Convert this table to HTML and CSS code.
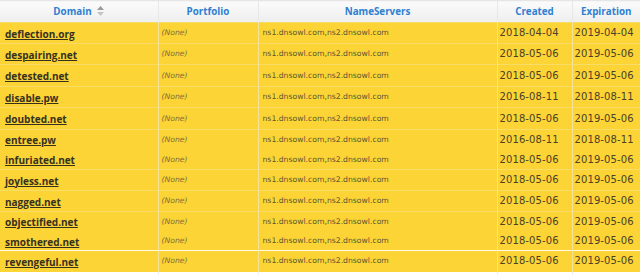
FILE: index.html
```html
<!DOCTYPE html>
<html lang="en">
<head>
<meta charset="UTF-8" />
<meta name="viewport" content="width=device-width, initial-scale=1" />
<title>Domains</title>
<link rel="stylesheet" href="styles.css">
</head>
<body>
  <table class="domains">
    <colgroup>
      <col class="c-domain" />
      <col class="c-portfolio" />
      <col class="c-ns" />
      <col class="c-created" />
      <col class="c-exp" />
    </colgroup>
    <thead>
      <tr>
        <th>Domain <span class="sort"><svg width="7" height="10" viewBox="0 0 7 10"><path d="M3.5 0L7 4H0z" fill="#9a9a9a"/><path d="M0 6h7L3.5 10z" fill="#c4c4c4"/></svg></span></th>
        <th>Portfolio</th>
        <th>NameServers</th>
        <th>Created</th>
        <th>Expiration</th>
      </tr>
    </thead>
    <tbody>
      <tr class="h21"><td class="name"><a href="#">deflection.org</a></td><td class="pf">(None)</td><td class="ns">ns1.dnsowl.com,ns2.dnsowl.com</td><td class="date">2018-04-04</td><td class="date">2019-04-04</td></tr>
      <tr class="h21"><td class="name"><a href="#">despairing.net</a></td><td class="pf">(None)</td><td class="ns">ns1.dnsowl.com,ns2.dnsowl.com</td><td class="date">2018-05-06</td><td class="date">2019-05-06</td></tr>
      <tr class="h22"><td class="name"><a href="#">detested.net</a></td><td class="pf">(None)</td><td class="ns">ns1.dnsowl.com,ns2.dnsowl.com</td><td class="date">2018-05-06</td><td class="date">2019-05-06</td></tr>
      <tr class="h21"><td class="name"><a href="#">disable.pw</a></td><td class="pf">(None)</td><td class="ns">ns1.dnsowl.com,ns2.dnsowl.com</td><td class="date">2016-08-11</td><td class="date">2018-08-11</td></tr>
      <tr class="h22"><td class="name"><a href="#">doubted.net</a></td><td class="pf">(None)</td><td class="ns">ns1.dnsowl.com,ns2.dnsowl.com</td><td class="date">2018-05-06</td><td class="date">2019-05-06</td></tr>
      <tr class="h20"><td class="name"><a href="#">entree.pw</a></td><td class="pf">(None)</td><td class="ns">ns1.dnsowl.com,ns2.dnsowl.com</td><td class="date">2016-08-11</td><td class="date">2018-08-11</td></tr>
      <tr class="h20 joined"><td class="name"><a href="#">infuriated.net</a></td><td class="pf">(None)</td><td class="ns">ns1.dnsowl.com,ns2.dnsowl.com</td><td class="date">2018-05-06</td><td class="date">2019-05-06</td></tr>
      <tr class="h21"><td class="name"><a href="#">joyless.net</a></td><td class="pf">(None)</td><td class="ns">ns1.dnsowl.com,ns2.dnsowl.com</td><td class="date">2018-05-06</td><td class="date">2019-05-06</td></tr>
      <tr class="h21"><td class="name"><a href="#">nagged.net</a></td><td class="pf">(None)</td><td class="ns">ns1.dnsowl.com,ns2.dnsowl.com</td><td class="date">2018-05-06</td><td class="date">2019-05-06</td></tr>
      <tr class="h20"><td class="name"><a href="#">objectified.net</a></td><td class="pf">(None)</td><td class="ns">ns1.dnsowl.com,ns2.dnsowl.com</td><td class="date">2018-05-06</td><td class="date">2019-05-06</td></tr>
      <tr class="h19 joined"><td class="name"><a href="#">smothered.net</a></td><td class="pf">(None)</td><td class="ns">ns1.dnsowl.com,ns2.dnsowl.com</td><td class="date">2018-05-06</td><td class="date">2019-05-06</td></tr>
      <tr class="h21 split"><td class="name"><a href="#">revengeful.net</a></td><td class="pf">(None)</td><td class="ns">ns1.dnsowl.com,ns2.dnsowl.com</td><td class="date">2018-05-06</td><td class="date">2019-05-06</td></tr>
      <tr class="blank"><td></td><td></td><td></td><td></td><td></td></tr>
    </tbody>
  </table>
</body>
</html>
```

FILE: styles.css
```css
body { margin: 0; background: #fff; font-family: "DejaVu Sans", Verdana, sans-serif; color: #3b3523; }

.domains { width: 640px; border-collapse: collapse; table-layout: fixed; }
.c-domain { width: 158px; }
.c-portfolio { width: 100px; }
.c-ns { width: 239px; }
.c-created { width: 75px; }
.c-exp { width: 68px; }

th {
  height: 22px; padding: 0; box-sizing: border-box; line-height: 12px;
  background: linear-gradient(#fbfbfb, #eeeeee);
  border-left: 1px solid #e8e8e8; border-top: 1px solid #e6e6e6;
  font-family: "Open Sans", "DejaVu Sans", sans-serif; font-weight: bold; font-size: 9.8px;
  color: #2e80d2; text-align: center; vertical-align: middle;
}
th:first-child { border-left: none; }
.sort { display: inline-block; margin-left: 3px; vertical-align: -1px; }
.sort svg { display: block; }

td {
  padding: 0 3px; background: #fdd435; white-space: nowrap; overflow: hidden;
  box-sizing: border-box; line-height: 12px;
  border-left: 1px solid #f6e39a; border-top: 1px solid #f7dc66; vertical-align: middle;
}
td:first-child { border-left: none; }
tr.h19 td { height: 19px; }
tr.h20 td { height: 20px; }
tr.h21 td { height: 21px; }
tr.h22 td { height: 22px; }
tr.joined td { border-top-color: #fdd435; }
tr.split td { border-top: 1px solid #fffbe8; }
tr.blank td { height: 3px; background: #fff; border-top: none; border-left-color: #eeeeee; }

.name { padding-left: 5px; }
.name a { font-family: "Open Sans", "DejaVu Sans", sans-serif; font-weight: bold; font-size: 10px; color: #36311f; text-decoration: underline; }
.pf { font-size: 7.7px; font-style: italic; color: #7b6d3c; }
.ns { font-size: 7.7px; color: #5e5433; padding-left: 4px; }
.date { font-size: 10px; letter-spacing: 0.1px; color: #4a4128; padding-left: 2px; }
```
